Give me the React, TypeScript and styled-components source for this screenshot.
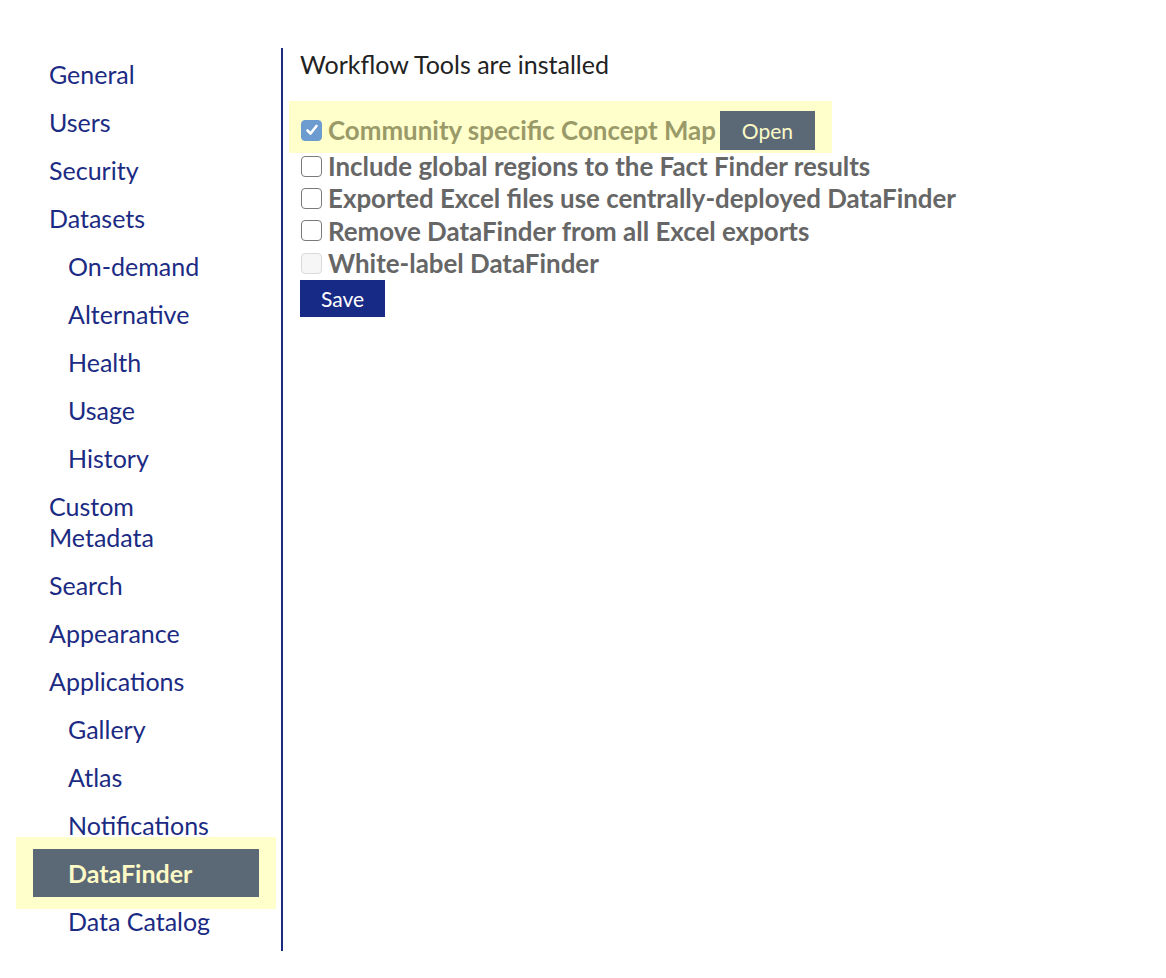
import React from "react";
import styled, { createGlobalStyle } from "styled-components";

const GlobalStyle = createGlobalStyle`
  html, body { margin: 0; padding: 0; background: #ffffff; }
  body { font-family: Lato, "Open Sans", sans-serif; }
`;

const NAVY = "#1b2b83";
const SLATE = "#5b6977";
const PALE = "#fdfac6";
const HIGHLIGHT = "#ffffcc";

const Page = styled.div`
  display: flex;
  align-items: flex-start;
  padding-top: 48px;
`;

const Sidebar = styled.nav`
  width: 226px;
  margin-left: 33px;
  padding: 2px 22px 6px 0;
  border-right: 2px solid ${NAVY};
  display: flex;
  flex-direction: column;
`;

const NavItem = styled.a<{ $sub?: boolean; $active?: boolean }>`
  display: block;
  padding: 8.5px 16px 8.5px ${(p) => (p.$sub ? 35 : 16)}px;
  font-size: 25px;
  line-height: 31px;
  color: ${(p) => (p.$active ? PALE : NAVY)};
  font-weight: ${(p) => (p.$active ? 700 : 400)};
  background: ${(p) => (p.$active ? SLATE : "transparent")};
  box-shadow: ${(p) =>
    p.$active
      ? `0 0 0 12px ${HIGHLIGHT}, 5px 0 0 12px ${HIGHLIGHT}, -5px 0 0 12px ${HIGHLIGHT}`
      : "none"};
  text-decoration: none;
  cursor: pointer;
`;

const Main = styled.main`
  padding-left: 17px;
  display: flex;
  flex-direction: column;
  align-items: flex-start;
`;

const Heading = styled.div`
  font-size: 25px;
  line-height: 32px;
  color: #222222;
  margin-bottom: 21px;
`;

const HighlightRow = styled.div`
  display: flex;
  align-items: center;
  background: ${HIGHLIGHT};
  margin-left: -11px;
  margin-bottom: -3px;
  padding: 10px 17px 3px 11px;
`;

const Row = styled.label<{ $muted?: boolean }>`
  display: flex;
  align-items: center;
  height: 32.3px;
  font-size: 25.9px;
  font-weight: 700;
  white-space: nowrap;
  color: ${(p) => (p.$muted ? "#9a9a68" : "#666666")};
  cursor: pointer;
`;

const Box = styled.span<{ $checked?: boolean; $disabled?: boolean }>`
  box-sizing: border-box;
  width: 21px;
  height: 21px;
  margin-left: 1px;
  margin-right: 6px;
  border-radius: 4px;
  display: inline-flex;
  align-items: center;
  justify-content: center;
  flex-shrink: 0;
  background: ${(p) => (p.$checked ? "#6c9bd0" : p.$disabled ? "#f6f6f6" : "#ffffff")};
  border: 1.5px solid
    ${(p) => (p.$checked ? "#6c9bd0" : p.$disabled ? "#dadada" : "#7a7a7a")};
`;

const OpenButton = styled.button`
  margin-left: 4px;
  width: 95px;
  height: 39px;
  border: none;
  background: ${SLATE};
  color: ${PALE};
  font-family: Lato, sans-serif;
  font-size: 21px;
  cursor: pointer;
  padding: 0;
`;

const SaveButton = styled.button`
  margin-top: 1px;
  width: 85px;
  height: 37px;
  border: none;
  background: #172a85;
  color: #ffffff;
  font-family: Lato, sans-serif;
  font-size: 21px;
  cursor: pointer;
  padding: 0;
`;

const Check = ({ checked, disabled }: { checked?: boolean; disabled?: boolean }) => (
  <Box $checked={checked} $disabled={disabled}>
    {checked && (
      <svg width="14" height="14" viewBox="0 0 14 14">
        <path d="M2.5 7.5 L5.5 10.5 L11.5 3" fill="none" stroke="#ffffff" strokeWidth="2.6" strokeLinecap="round" strokeLinejoin="round" />
      </svg>
    )}
  </Box>
);

const nav: { label: React.ReactNode; sub?: boolean; active?: boolean }[] = [
  { label: "General" },
  { label: "Users" },
  { label: "Security" },
  { label: "Datasets" },
  { label: "On-demand", sub: true },
  { label: "Alternative", sub: true },
  { label: "Health", sub: true },
  { label: "Usage", sub: true },
  { label: "History", sub: true },
  { label: "Custom Metadata" },
  { label: "Search" },
  { label: "Appearance" },
  { label: "Applications" },
  { label: "Gallery", sub: true },
  { label: "Atlas", sub: true },
  { label: "Notifications", sub: true },
  { label: "DataFinder", sub: true, active: true },
  { label: "Data Catalog", sub: true },
];

const options = [
  "Include global regions to the Fact Finder results",
  "Exported Excel files use centrally-deployed DataFinder",
  "Remove DataFinder from all Excel exports",
];

export default function App() {
  return (
    <>
      <GlobalStyle />
      <Page>
        <Sidebar>
          {nav.map((n, i) => (
            <NavItem key={i} $sub={n.sub} $active={n.active}>
              {n.label}
            </NavItem>
          ))}
        </Sidebar>
        <Main>
          <Heading>Workflow Tools are installed</Heading>
          <HighlightRow>
            <Row $muted>
              <Check checked />
              Community specific Concept Map
            </Row>
            <OpenButton>Open</OpenButton>
          </HighlightRow>
          {options.map((o) => (
            <Row key={o}>
              <Check />
              {o}
            </Row>
          ))}
          <Row>
            <Check disabled />
            White-label DataFinder
          </Row>
          <SaveButton>Save</SaveButton>
        </Main>
      </Page>
    </>
  );
}
